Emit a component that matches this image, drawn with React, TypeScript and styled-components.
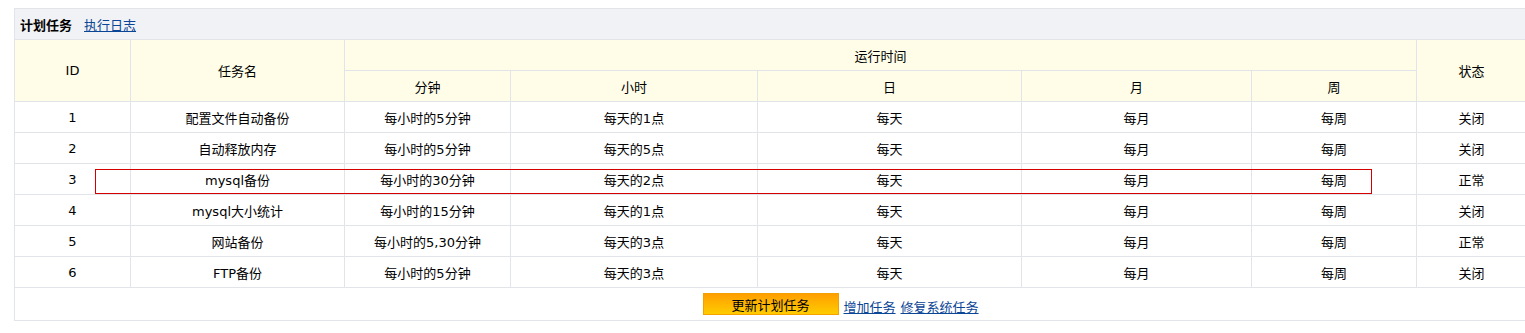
import React from "react";
import styled, { createGlobalStyle } from "styled-components";

const Global = createGlobalStyle`
  body {
    margin: 8px 0 8px 8px;
    background: #fff;
    font-family: "DejaVu Sans", "Noto Sans CJK SC", sans-serif;
    font-size: 13px;
    color: #000;
  }
`;

const Page = styled.div`
  padding-left: 6px;
  overflow: hidden;
`;

const Panel = styled.div`
  position: relative;
  width: 1512px;
  border: 1px solid #e1e4e9;
  border-bottom: none;
  box-sizing: border-box;
`;

const TitleBar = styled.div`
  display: flex;
  align-items: center;
  gap: 12px;
  height: 30px;
  padding-left: 5px;
  background: #f0f2f5;
`;

const Title = styled.span`
  font-weight: bold;
  font-family: "Noto Sans CJK SC", sans-serif;
`;

const Link = styled.a`
  color: #0a4596;
  text-decoration: underline;
  cursor: pointer;
`;

const Table = styled.table`
  table-layout: fixed;
  border-collapse: collapse;
  margin-left: -1px;
  width: calc(100% + 2px);
`;

const HeadCell = styled.th`
  height: 30px;
  padding: 0;
  font-weight: normal;
  text-align: center;
  background: #fffde8;
  border: 1px solid #e1e4e9;
`;

const Cell = styled.td`
  height: 30px;
  padding: 0;
  text-align: center;
  border: 1px solid #e1e4e9;
`;

const FooterCell = styled.td`
  height: 32px;
  padding: 0;
  border: 1px solid #e1e4e9;
`;

const Footer = styled.div`
  display: grid;
  grid-template-columns: 1fr auto 1fr;
  align-items: center;
`;

const FooterLinks = styled.div`
  display: flex;
  gap: 5px;
  padding-left: 5px;
  padding-top: 5px;
`;

const UpdateButton = styled.button`
  width: 136px;
  height: 22px;
  padding: 0;
  border: 1px solid #f2a200;
  background: linear-gradient(#ff9f00, #ffcc00);
  color: #000;
  font-family: "Noto Sans CJK SC", sans-serif;
  font-size: 13px;
  cursor: pointer;
`;

const FocusRing = styled.div`
  position: absolute;
  left: 80px;
  top: 160px;
  width: 1277px;
  height: 25px;
  box-sizing: border-box;
  border: 1px solid #d40000;
  pointer-events: none;
`;

const rows = [
  ["1", "配置文件自动备份", "每小时的5分钟", "每天的1点", "关闭"],
  ["2", "自动释放内存", "每小时的5分钟", "每天的5点", "关闭"],
  ["3", "mysql备份", "每小时的30分钟", "每天的2点", "正常"],
  ["4", "mysql大小统计", "每小时的15分钟", "每天的1点", "关闭"],
  ["5", "网站备份", "每小时的5,30分钟", "每天的3点", "正常"],
  ["6", "FTP备份", "每小时的5分钟", "每天的3点", "关闭"],
];

const widths = [116, 214, 166, 247, 264, 230, 165, 110];

export default function App() {
  return (
    <Page>
      <Global />
      <Panel>
        <TitleBar>
          <Title>计划任务</Title>
          <Link>执行日志</Link>
        </TitleBar>
        <Table>
          <colgroup>
            {widths.map((w, i) => (
              <col key={i} style={{ width: w }} />
            ))}
          </colgroup>
          <thead>
            <tr>
              <HeadCell rowSpan={2}>ID</HeadCell>
              <HeadCell rowSpan={2}>任务名</HeadCell>
              <HeadCell colSpan={5}>运行时间</HeadCell>
              <HeadCell rowSpan={2}>状态</HeadCell>
            </tr>
            <tr>
              <HeadCell>分钟</HeadCell>
              <HeadCell>小时</HeadCell>
              <HeadCell>日</HeadCell>
              <HeadCell>月</HeadCell>
              <HeadCell>周</HeadCell>
            </tr>
          </thead>
          <tbody>
            {rows.map((r) => (
              <tr key={r[0]}>
                <Cell>{r[0]}</Cell>
                <Cell>{r[1]}</Cell>
                <Cell>{r[2]}</Cell>
                <Cell>{r[3]}</Cell>
                <Cell>每天</Cell>
                <Cell>每月</Cell>
                <Cell>每周</Cell>
                <Cell>{r[4]}</Cell>
              </tr>
            ))}
            <tr>
              <FooterCell colSpan={8}>
                <Footer>
                  <span />
                  <UpdateButton>更新计划任务</UpdateButton>
                  <FooterLinks>
                    <Link>增加任务</Link>
                    <Link>修复系统任务</Link>
                  </FooterLinks>
                </Footer>
              </FooterCell>
            </tr>
          </tbody>
        </Table>
        <FocusRing />
      </Panel>
    </Page>
  );
}
